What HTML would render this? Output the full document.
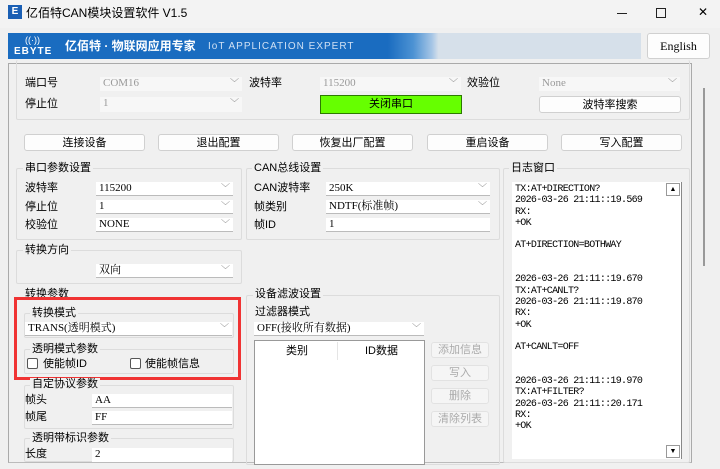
<!DOCTYPE html><html><head><meta charset="utf-8"><style>
*{margin:0;padding:0;box-sizing:border-box}
body{width:720px;height:469px;background:#f0f0f0;position:relative;overflow:hidden;font-family:"Liberation Sans","Noto Sans CJK SC",sans-serif;font-size:11px;color:#000}
.a{position:absolute}
.t{position:absolute;line-height:12px;white-space:nowrap}
.cb{position:absolute;background:#fff;border-bottom:1px solid #bbb;height:14px;font-family:"Liberation Serif","Noto Serif CJK SC",serif;font-size:11px;line-height:13px;padding-left:3px}
.cb.d{background:#f7f7f7;color:#999;border:none}
.cb .v{position:absolute;right:3px;top:0;color:#777;font-size:9px}
.btn{position:absolute;background:#fdfdfd;border:1px solid #d0d0d0;border-radius:3px;text-align:center;line-height:16px;font-size:11px}
.btn.d{background:#f5f5f5;color:#aaa;border-color:#e2e2e2}
.g{position:absolute;border:1px solid #dcdcdc;border-radius:2px}
.lbl{position:absolute;background:#f0f0f0;padding:0 2px;line-height:12px;white-space:nowrap}
.log{font-family:"Liberation Mono","Noto Sans CJK SC",monospace;font-size:10px;letter-spacing:-0.7px;line-height:11.3px;white-space:pre}
</style></head><body>
<div class="a" style="left:0;top:0;width:720px;height:28px;background:#f3f3f3"></div>
<div class="a" style="left:8px;top:5px;width:14px;height:14px;background:#1a5fb4;color:#fff;font-size:10px;font-weight:bold;line-height:14px;text-align:center">E</div>
<div class="t" style="left:26px;top:7px;font-size:12px">亿佰特CAN模块设置软件 V1.5</div>
<div class="a" style="left:617px;top:13px;width:10px;height:1px;background:#222"></div>
<div class="a" style="left:656px;top:8px;width:10px;height:10px;border:1px solid #222"></div>
<div class="t" style="left:698px;top:6px;font-size:12px">✕</div>
<div class="a" style="left:8px;top:33px;width:633px;height:26px;background:linear-gradient(90deg,#1a6cc0 0,#1a6cc0 60%,#4c92d3 64%,#a7c6e6 67%,#d6e0ea 68%,#d6e0ea 100%)"></div>
<div class="t" style="left:25px;top:34px;color:#fff;font-size:9px">((·))</div>
<div class="t" style="left:14px;top:46px;color:#fff;font-size:10px;font-weight:bold;letter-spacing:1px">EBYTE</div>
<div class="t" style="left:65px;top:39px;color:#fff;font-size:12px;line-height:14px;font-weight:bold">亿佰特 · 物联网应用专家</div>
<div class="t" style="left:208px;top:41px;color:#cfe0f3;font-size:10px;letter-spacing:1px">IoT APPLICATION EXPERT</div>
<div class="btn" style="left:647px;top:33px;width:63px;height:26px;line-height:24px;font-family:'Liberation Serif',serif;font-size:12px">English</div>
<div class="a" style="left:8px;top:63px;width:684px;height:400px;border:1px solid #aaa;border-bottom:1px solid #bbb"></div>
<div class="a" style="left:703px;top:88px;width:2px;height:178px;background:#999"></div>
<div class="g" style="left:16px;top:60px;width:674px;height:60px;border-top:none"></div>
<div class="t" style="left:25px;top:77px">端口号</div>
<div class="cb d" style="left:100px;top:77px;width:142px">COM16<span class="v">﹀</span></div>
<div class="t" style="left:249px;top:77px">波特率</div>
<div class="cb d" style="left:320px;top:77px;width:141px">115200<span class="v">﹀</span></div>
<div class="t" style="left:467px;top:77px">效验位</div>
<div class="cb d" style="left:539px;top:77px;width:141px">None<span class="v">﹀</span></div>
<div class="t" style="left:25px;top:98px">停止位</div>
<div class="cb d" style="left:100px;top:97px;width:142px;height:15px">1<span class="v">﹀</span></div>
<div class="a" style="left:320px;top:95px;width:142px;height:19px;background:#66ff00;border:1px solid #2c7a00;text-align:center;line-height:17px">关闭串口</div>
<div class="btn" style="left:539px;top:96px;width:142px;height:17px">波特率搜索</div>
<div class="btn" style="left:24px;top:134px;width:121px;height:17px">连接设备</div>
<div class="btn" style="left:158px;top:134px;width:121px;height:17px">退出配置</div>
<div class="btn" style="left:292px;top:134px;width:121px;height:17px">恢复出厂配置</div>
<div class="btn" style="left:427px;top:134px;width:121px;height:17px">重启设备</div>
<div class="btn" style="left:561px;top:134px;width:121px;height:17px">写入配置</div>

<div class="g" style="left:16px;top:168px;width:226px;height:72px"></div>
<div class="lbl" style="left:23px;top:162px">串口参数设置</div>
<div class="t" style="left:25px;top:182px">波特率</div>
<div class="cb" style="left:96px;top:182px;width:137px">115200<span class="v">﹀</span></div>
<div class="t" style="left:25px;top:201px">停止位</div>
<div class="cb" style="left:96px;top:200px;width:137px">1<span class="v">﹀</span></div>
<div class="t" style="left:25px;top:219px">校验位</div>
<div class="cb" style="left:96px;top:218px;width:137px">NONE<span class="v">﹀</span></div>

<div class="g" style="left:246px;top:168px;width:254px;height:72px"></div>
<div class="lbl" style="left:252px;top:162px">CAN总线设置</div>
<div class="t" style="left:254px;top:182px">CAN波特率</div>
<div class="cb" style="left:326px;top:182px;width:164px">250K<span class="v">﹀</span></div>
<div class="t" style="left:254px;top:201px">帧类别</div>
<div class="cb" style="left:326px;top:200px;width:164px">NDTF(标准帧)<span class="v">﹀</span></div>
<div class="t" style="left:254px;top:219px">帧ID</div>
<div class="cb" style="left:326px;top:218px;width:164px">1</div>

<div class="g" style="left:16px;top:250px;width:226px;height:34px"></div>
<div class="lbl" style="left:23px;top:244px">转换方向</div>
<div class="cb" style="left:96px;top:264px;width:137px">双向<span class="v">﹀</span></div>

<div class="lbl" style="left:23px;top:288px">转换参数</div>
<div class="g" style="left:24px;top:313px;width:210px;height:25px"></div>
<div class="lbl" style="left:30px;top:307px">转换模式</div>
<div class="cb" style="left:25px;top:322px;width:207px">TRANS(透明模式)<span class="v">﹀</span></div>
<div class="g" style="left:24px;top:349px;width:210px;height:25px"></div>
<div class="lbl" style="left:30px;top:343px">透明模式参数</div>
<div class="a" style="left:27px;top:358px;width:11px;height:11px;border:1px solid #555;border-radius:2px;background:#fff"></div>
<div class="t" style="left:43px;top:358px">使能帧ID</div>
<div class="a" style="left:130px;top:358px;width:11px;height:11px;border:1px solid #555;border-radius:2px;background:#fff"></div>
<div class="t" style="left:145px;top:358px">使能帧信息</div>
<div class="a" style="left:14px;top:297px;width:227px;height:83px;border:3px solid #f03333"></div>

<div class="g" style="left:24px;top:385px;width:210px;height:44px;border-top:1px solid #ddd"></div>
<div class="lbl" style="left:30px;top:378px">自定协议参数</div>
<div class="t" style="left:25px;top:394px">帧头</div>
<div class="cb" style="left:92px;top:394px;width:140px">AA</div>
<div class="t" style="left:25px;top:411px">帧尾</div>
<div class="cb" style="left:92px;top:411px;width:140px">FF</div>
<div class="g" style="left:24px;top:438px;width:210px;height:24px"></div>
<div class="lbl" style="left:30px;top:432px">透明带标识参数</div>
<div class="t" style="left:25px;top:448px">长度</div>
<div class="cb" style="left:92px;top:448px;width:140px;border:none">2</div>

<div class="g" style="left:246px;top:295px;width:254px;height:170px"></div>
<div class="lbl" style="left:253px;top:288px">设备滤波设置</div>
<div class="t" style="left:255px;top:306px">过滤器模式</div>
<div class="cb" style="left:254px;top:322px;width:170px">OFF(接收所有数据)<span class="v">﹀</span></div>
<div class="a" style="left:254px;top:340px;width:171px;height:125px;background:#fff;border:1px solid #999"></div>
<div class="a" style="left:337px;top:342px;width:1px;height:18px;background:#e5e5e5"></div>
<div class="t" style="left:286px;top:345px">类别</div>
<div class="t" style="left:365px;top:345px">ID数据</div>
<div class="btn d" style="left:431px;top:342px;width:58px;height:16px;line-height:14px">添加信息</div>
<div class="btn d" style="left:431px;top:365px;width:58px;height:16px;line-height:14px">写入</div>
<div class="btn d" style="left:431px;top:388px;width:58px;height:16px;line-height:14px">删除</div>
<div class="btn d" style="left:431px;top:411px;width:58px;height:16px;line-height:14px">清除列表</div>

<div class="g" style="left:503px;top:168px;width:187px;height:295px"></div>
<div class="lbl" style="left:509px;top:162px">日志窗口</div>
<div class="a" style="left:512px;top:182px;width:170px;height:277px;background:#fff;border-right:1px solid #888"></div>
<div class="a log" style="left:515px;top:184px">TX:AT+DIRECTION?
2026-03-26 21:11::19.569
RX:
+OK

AT+DIRECTION=BOTHWAY


2026-03-26 21:11::19.670
TX:AT+CANLT?
2026-03-26 21:11::19.870
RX:
+OK

AT+CANLT=OFF


2026-03-26 21:11::19.970
TX:AT+FILTER?
2026-03-26 21:11::20.171
RX:
+OK</div>
<div class="a" style="left:666px;top:183px;width:14px;height:13px;border:1px solid #999;background:#fff;font-size:7px;text-align:center;line-height:12px">▲</div>
<div class="a" style="left:666px;top:445px;width:14px;height:13px;border:1px solid #999;background:#fff;font-size:7px;text-align:center;line-height:12px">▼</div>
</body></html>
